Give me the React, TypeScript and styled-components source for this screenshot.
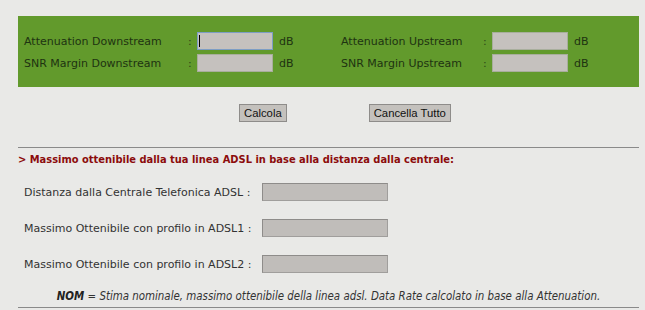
import styled, { createGlobalStyle } from 'styled-components';

const GlobalStyle = createGlobalStyle`
  html, body {
    margin: 0;
    padding: 0;
    background: #e9e9e7;
  }
`;

const Page = styled.div`
  width: 621px;
  padding: 16px 0 0 18px;
  font-family: 'DejaVu Sans', Verdana, sans-serif;
  font-size: 11px;
`;

const Panel = styled.div`
  background: #629a2c;
  padding: 16px 6px 15px;
  display: grid;
  grid-template-columns: 164px 9px 76px 68px 142px 9px 76px auto;
  row-gap: 4px;
  align-items: center;
`;

const Label = styled.span`
  color: #1e3311;
  white-space: nowrap;
`;

const Colon = styled.span`
  color: #2a4418;
`;

const Unit = styled.span`
  color: #1e3311;
  padding-left: 6px;
`;

const FieldWrap = styled.span`
  position: relative;
  display: block;
  height: 18px;
`;

const Field = styled.input<{ $focused?: boolean }>`
  box-sizing: border-box;
  width: 76px;
  height: 18px;
  margin: 0;
  padding: 0;
  display: block;
  background: #c5c1be;
  border: 1px solid ${(p) => (p.$focused ? '#7d9dc4' : '#a8ae9c')};
  outline: none;
`;

const Caret = styled.span`
  position: absolute;
  left: 2px;
  top: 3px;
  width: 1px;
  height: 12px;
  background: #000;
`;

const Buttons = styled.div`
  display: flex;
  gap: 82px;
  padding-left: 221px;
  margin-top: 17px;
`;

const Button = styled.button`
  box-sizing: border-box;
  height: 18px;
  margin: 0;
  padding: 0 4px;
  font-family: 'Liberation Sans', Arial, sans-serif;
  font-size: 11.3px;
  line-height: 16px;
  color: #111;
  background: #c4c1bd;
  border: 1px solid #8e8c8a;
`;

const Divider = styled.div`
  height: 1px;
  background: #8a8a8a;
`;

const TopDivider = styled(Divider)`
  margin-top: 25px;
`;

const Heading = styled.div`
  margin-top: 5px;
  line-height: 14px;
  font-family: 'DejaVu Sans Condensed', Tahoma, sans-serif;
  font-weight: bold;
  font-size: 11px;
  color: #8c0c0c;
  white-space: nowrap;
`;

const Results = styled.div`
  margin-top: 16px;
  padding-left: 6px;
  display: flex;
  flex-direction: column;
  gap: 18px;
`;

const ResultRow = styled.div`
  display: flex;
  align-items: center;
  height: 18px;
  color: #333;
  white-space: pre;
`;

const ResultField = styled.input<{ $gap: number }>`
  box-sizing: border-box;
  width: 126px;
  height: 18px;
  margin: 0 0 0 ${(p) => p.$gap}px;
  padding: 0;
  background: #c0bdba;
  border: 1px solid #a09e9c;
  border-top-color: #8e8c8a;
  border-left-color: #8e8c8a;
  outline: none;
`;

const Note = styled.div`
  margin-top: 16px;
  line-height: 14px;
  text-align: center;
  font-style: italic;
  font-family: 'DejaVu Sans Condensed', Tahoma, sans-serif;
  font-size: 11.4px;
  color: #333;
  white-space: nowrap;
  b {
    color: #222;
  }
`;

const BottomDivider = styled(Divider)`
  margin-top: 4px;
`;

const results = [
  { label: 'Distanza dalla Centrale Telefonica ADSL :', gap: 12 },
  { label: 'Massimo Ottenibile con profilo in ADSL1 :', gap: 11 },
  { label: 'Massimo Ottenibile con profilo in ADSL2 :', gap: 11 },
];

export default function App() {
  return (
    <>
      <GlobalStyle />
      <Page>
        <Panel>
          <Label>Attenuation Downstream</Label>
          <Colon>:</Colon>
          <FieldWrap>
            <Field $focused />
            <Caret />
          </FieldWrap>
          <Unit>dB</Unit>
          <Label>Attenuation Upstream</Label>
          <Colon>:</Colon>
          <FieldWrap>
            <Field />
          </FieldWrap>
          <Unit>dB</Unit>

          <Label>SNR Margin Downstream</Label>
          <Colon>:</Colon>
          <FieldWrap>
            <Field />
          </FieldWrap>
          <Unit>dB</Unit>
          <Label>SNR Margin Upstream</Label>
          <Colon>:</Colon>
          <FieldWrap>
            <Field />
          </FieldWrap>
          <Unit>dB</Unit>
        </Panel>

        <Buttons>
          <Button>Calcola</Button>
          <Button>Cancella Tutto</Button>
        </Buttons>

        <TopDivider />
        <Heading>
          &gt; Massimo ottenibile dalla tua linea ADSL in base alla distanza dalla centrale:
        </Heading>

        <Results>
          {results.map((r) => (
            <ResultRow key={r.label}>
              {r.label}
              <ResultField $gap={r.gap} />
            </ResultRow>
          ))}
        </Results>

        <Note>
          <b>NOM</b> = Stima nominale, massimo ottenibile della linea adsl. Data Rate calcolato in
          base alla Attenuation.
        </Note>
        <BottomDivider />
      </Page>
    </>
  );
}
